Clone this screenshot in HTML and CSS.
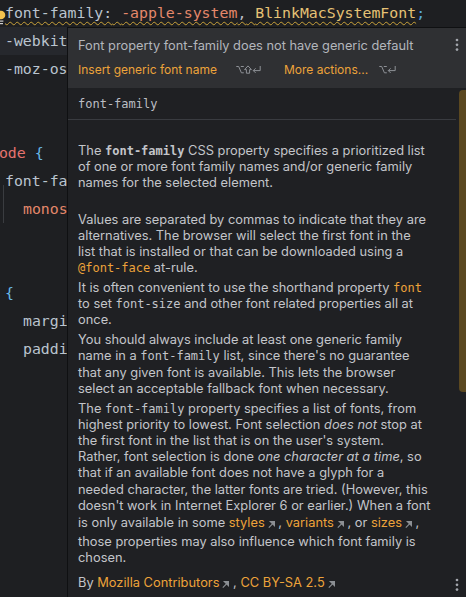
FILE: index.html
```html
<!DOCTYPE html>
<html>
<head>
<meta charset="utf-8">
<link rel="stylesheet" href="styles.css">
</head>
<body>
<div class="editor">
  <div class="code">
    <div class="ln ind0"><svg class="bulb" width="10" height="17" viewBox="0 0 10 17"><circle cx="5" cy="5" r="4.3" fill="#f2c14e"/><rect x="2.6" y="10.5" width="4.8" height="1.2" fill="#cfcfcf"/><rect x="3" y="13" width="4" height="1.2" fill="#cfcfcf"/></svg><span class="warn"><span class="prop">font-family:</span> <span class="val">-apple-system</span><span class="punc">,</span> <span class="fnt">BlinkMacSystemFont</span></span><span class="semi">;</span></div>
    <div class="ln ind0 cur"><span class="prop">-webkit-font-smoothing:</span> <span class="val">antialiased</span><span class="semi">;</span></div>
    <div class="ln ind0"><span class="prop">-moz-osx-font-smoothing:</span> <span class="val">grayscale</span><span class="semi">;</span></div>
    <div class="ln"></div>
    <div class="ln"></div>
    <div class="ln indneg"><span class="sel">code</span> <span class="brace">{</span></div>
    <div class="ln ind0"><span class="prop">font-family:</span></div>
    <div class="ln ind1 guide"><span class="val">monospace</span><span class="semi">;</span></div>
    <div class="ln"></div>
    <div class="ln"></div>
    <div class="ln ind0"><span class="brace">{</span></div>
    <div class="ln ind1"><span class="prop">margin:</span> <span class="num">0</span><span class="semi">;</span></div>
    <div class="ln ind1"><span class="prop">padding:</span> <span class="num">0</span><span class="semi">;</span></div>
  </div>

  <div class="popup">
    <div class="popup-head">
      <div class="title-row">
        <span class="title">Font property font-family does not have generic default</span>
        <svg class="kebab" width="4" height="14" viewBox="0 0 4 14"><circle cx="2" cy="2" r="1.35"/><circle cx="2" cy="6.8" r="1.35"/><circle cx="2" cy="11.6" r="1.35"/></svg>
      </div>
      <div class="actions">
        <span class="act">Insert generic font name</span>
        <span class="keys first-keys">
          <svg class="key" width="8" height="9" viewBox="0 0 8 9"><path d="M0.3 1.5 H2.7 L5.4 7.8 H7.8 M4.8 1.5 H7.8"/></svg>
          <svg class="key" width="8" height="9" viewBox="0 0 8 9"><path d="M4 0.9 L7.4 4.6 H5.6 V8.2 H2.4 V4.6 H0.6 Z"/></svg>
          <svg class="key" width="9" height="9" viewBox="0 0 9 9"><path d="M8.2 1 V5.6 H1.3 M3.6 3.3 L1.3 5.6 L3.6 7.9"/></svg>
        </span>
        <span class="act more">More actions...</span>
        <span class="keys second-keys">
          <svg class="key" width="8" height="9" viewBox="0 0 8 9"><path d="M0.3 1.5 H2.7 L5.4 7.8 H7.8 M4.8 1.5 H7.8"/></svg>
          <svg class="key" width="9" height="9" viewBox="0 0 9 9"><path d="M8.2 1 V5.6 H1.3 M3.6 3.3 L1.3 5.6 L3.6 7.9"/></svg>
        </span>
      </div>
    </div>
    <div class="doc">
      <div class="def">font-family</div>
      <div class="content">
        <p class="lead">The <code class="b">font-family</code> CSS property specifies a prioritized list<br>of one or more font family names and/or generic family<br>names for the selected element.</p>
        <p>Values are separated by commas to indicate that they are<br>alternatives. The browser will select the first font in the<br>list that is installed or that can be downloaded using a<br><code class="lnk">@font-face</code> at-rule.</p>
        <p>It is often convenient to use the shorthand property <code class="lnk">font</code><br>to set <code>font-size</code> and other font related properties all at<br>once.</p>
        <p>You should always include at least one generic family<br>name in a <code>font-family</code> list, since there's no guarantee<br>that any given font is available. This lets the browser<br>select an acceptable fallback font when necessary.</p>
        <p>The <code>font-family</code> property specifies a list of fonts, from<br>highest priority to lowest. Font selection <em>does not</em> stop at<br>the first font in the list that is on the user's system.<br>Rather, font selection is done <em>one character at a time</em>, so<br>that if an available font does not have a glyph for a<br>needed character, the latter fonts are tried. (However, this<br>doesn't work in Internet Explorer 6 or earlier.) When a font<br>is only available in some <a class="link">styles</a><svg class="ext" width="7" height="20" viewBox="0 0 7 20"><path d="M0.8 13.6 L5 9.4"/><polygon points="2.4,7.6 6.4,7.6 6.4,11.6"/></svg> , <a class="link">variants</a><svg class="ext" width="7" height="20" viewBox="0 0 7 20"><path d="M0.8 13.6 L5 9.4"/><polygon points="2.4,7.6 6.4,7.6 6.4,11.6"/></svg> , or <a class="link">sizes</a><svg class="ext" width="7" height="20" viewBox="0 0 7 20"><path d="M0.8 13.6 L5 9.4"/><polygon points="2.4,7.6 6.4,7.6 6.4,11.6"/></svg> ,<br>those properties may also influence which font family is<br>chosen.</p>
      </div>
      <div class="footer">
        <span class="credit">By <a class="link">Mozilla Contributors</a><svg class="ext" width="7" height="20" viewBox="0 0 7 20"><path d="M0.8 13.6 L5 9.4"/><polygon points="2.4,7.6 6.4,7.6 6.4,11.6"/></svg> , <a class="link">CC BY-SA 2.5</a><svg class="ext" width="7" height="20" viewBox="0 0 7 20"><path d="M0.8 13.6 L5 9.4"/><polygon points="2.4,7.6 6.4,7.6 6.4,11.6"/></svg></span>
        <svg class="kebab" width="4" height="14" viewBox="0 0 4 14"><circle cx="2" cy="2" r="1.35"/><circle cx="2" cy="6.8" r="1.35"/><circle cx="2" cy="11.6" r="1.35"/></svg>
      </div>
    </div>
    <div class="thumb"></div>
  </div>
</div>
</body>
</html>
```

FILE: styles.css
```css
html, body {
  margin: 0;
  padding: 0;
}

body {
  background: #1e1f22;
  overflow: hidden;
  font-family: Inter, "Noto Sans", sans-serif;
}

.editor {
  position: relative;
  width: 466px;
  height: 597px;
  overflow: hidden;
}

/* ---------- code ---------- */
.code {
  margin-top: -1px;
  font-family: "DejaVu Sans Mono", monospace;
  font-size: 14.85px;
  line-height: 28px;
  color: #bac4cf;
}

.ln {
  position: relative;
  height: 28px;
  white-space: pre;
}

.ln.cur {
  background: #26282d;
}

.ind0 { padding-left: 5px; }
.ind1 { padding-left: 23px; }
.indneg { margin-left: -10px; }

.guide::before {
  content: "";
  position: absolute;
  left: 3px;
  top: -10px;
  height: 38px;
  border-left: 1px solid #3a3c40;
}

.bulb {
  position: absolute;
  left: -4px;
  top: 11px;
}

.warn {
  text-decoration: underline wavy #c9a23a;
  text-decoration-thickness: 1px;
  text-underline-offset: 3px;
}

.prop { color: #bac4cf; }
.val { color: #e5886b; }
.punc { color: #bcbec4; }
.fnt { color: #e6c275; }
.semi { color: #56a8e0; }
.sel { color: #e5736f; }
.brace { color: #68b8e8; }
.num { color: #2aacb8; }

/* ---------- popup ---------- */
.popup {
  position: absolute;
  left: 67px;
  top: 27px;
  right: 0;
  bottom: -40px;
  border-left: 1px solid #0f1012;
  border-top: 1px solid #0f1012;
  background: #1f2023;
  display: flex;
  flex-direction: column;
}

.popup-head {
  background: #2f3033;
  padding: 9px 0 11px 10px;
}

.title-row {
  display: flex;
  align-items: center;
  height: 16px;
  font-size: 12.8px;
  color: #b3b6bc;
}

.kebab {
  margin-left: auto;
  margin-right: 7px;
  fill: #a3a6ad;
}

.actions {
  display: flex;
  align-items: center;
  height: 16px;
  margin-top: 8px;
  font-size: 12px;
}

.act {
  color: #eda33a;
}

.keys {
  display: flex;
  align-items: center;
}

.first-keys { margin-left: 19px; }
.more { margin-left: 23px; }
.second-keys { margin-left: 11px; }

.key {
  fill: none;
  stroke: #8e9197;
  stroke-width: 1;
}

.doc {
  display: flex;
  flex-direction: column;
}

.def {
  margin-right: 10px;
  padding: 8px 0 7px 10px;
  font-family: "DejaVu Sans Mono", monospace;
  font-size: 12px;
  line-height: 16px;
  color: #bcbec4;
  border-bottom: 1px solid #393b40;
}

.content {
  padding: 23px 10px 0;
  font-size: 12.85px;
  line-height: 16.2px;
  color: #c3c5ca;
}

.content p {
  margin: 0 0 3.6px;
  white-space: nowrap;
}

.content p.lead {
  margin-bottom: 20px;
}

code {
  font-family: "DejaVu Sans Mono", monospace;
  font-size: 12px;
  line-height: 1;
}

code.b {
  font-weight: bold;
}

code.lnk,
.link {
  color: #eda33a;
}

em {
  font-style: italic;
}

.ext {
  display: inline-block;
  vertical-align: -7px;
  margin-left: 3px;
  fill: #8c8f94;
  stroke: #8c8f94;
  stroke-width: 1.2;
}

.footer {
  display: flex;
  align-items: center;
  margin-top: 4px;
  padding-left: 10px;
  font-size: 12.85px;
  line-height: 16.2px;
  color: #c3c5ca;
}

.footer .kebab {
  margin-top: 1px;
}

.thumb {
  position: absolute;
  right: 0;
  top: 62px;
  width: 7px;
  height: 302px;
  background: #5b4820;
  border-radius: 4px 0 0 4px;
}
```
